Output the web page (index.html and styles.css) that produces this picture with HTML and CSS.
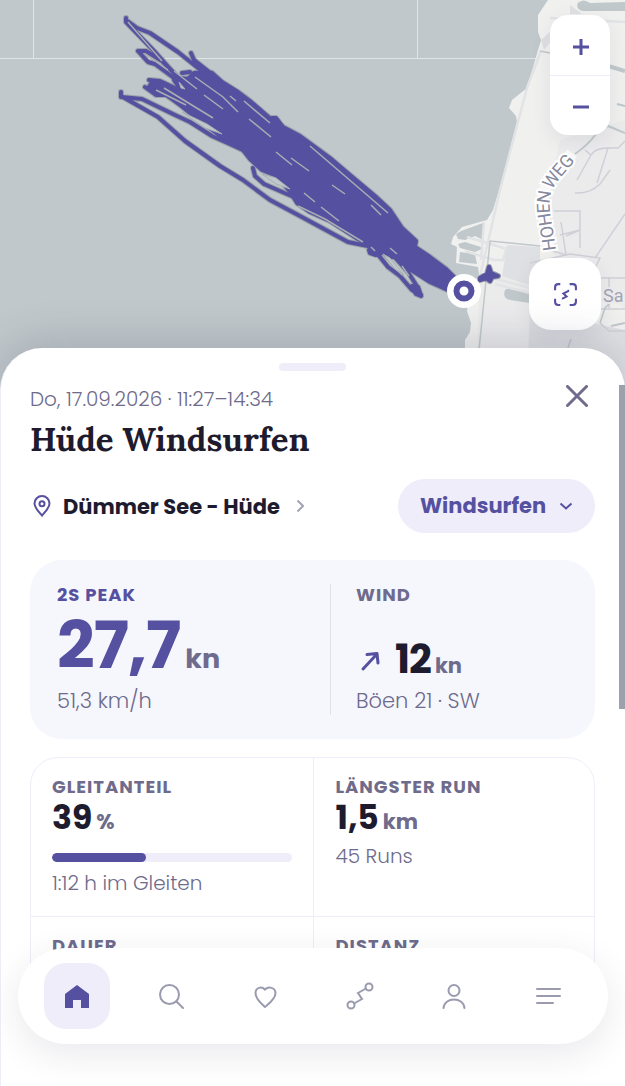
FILE: index.html
```html
<!DOCTYPE html>
<html lang="de">
<head>
<meta charset="utf-8">
<meta name="viewport" content="width=device-width, initial-scale=1">
<title>Hüde Windsurfen</title>
<link rel="stylesheet" href="styles.css">
</head>
<body>
<div class="app">
  <section class="map" aria-label="Karte">
    <svg class="map-canvas" viewBox="0 0 625 400" preserveAspectRatio="xMidYMin slice">
      <defs>
        <g id="track">
          <path class="mass" d="M174 80L180 78L188 79L194 73L208 72L212 73L222 82L238 92L250 101L272 120L276 120L283 127L300 136L315 147L330 158L350 175L375 196L390 210L402 228L416 241L415 247L430 257L446 269L458 281L450 291L430 282L405 266L395 257L388 257L376 251L372 246L358 239L330 221L310 212L297 203L291 193L277 176L262 170L250 159L243 150L225 140L215 132L200 121L180 105L165 94L155 92L149 87L152 82L166 85L182 92Z"/>
          <path d="M126 18L126 22L155 52L180 80M126 20L137 28L150 33L178 52L203 72M191 53L194 60L208 71M138 51L146 51L162 61L185 84M138 51L148 62L155 64L174 78L185 92M149 80L160 81L175 88L200 104M145 87L156 95L166 95L190 108M121 92L121 97L142 99L175 115L190 122L212 136L243 150M121 96L158 117L185 141L220 166L243 180L270 200L300 216L348 242L368 246L377 254M253 168L255 176L264 184L296 198M376 252L388 267L400 276L412 290L421 295M391 253L408 272L418 288L420 295M182 73L190 72M272 118L276 118L282 126"/>
          <path class="mass" d="M412 286L418 287L421 296L416 294Z M369 250L378 250L376 255L370 253Z"/>
          <path class="mass" d="M480 278L487 274L489 267L491 273L498 276L492 277L490 281L486 278L480 280Z"/>
        </g>
      </defs>
      <rect width="625" height="400" fill="#c0c8cb"/>
      <path d="M33.500 0V58M417.500 0V58M0 58.500H538" stroke="#e1e5e7" fill="none"/>
      <path fill="#f0f0ef" d="M548 0L538 15V32L541 40L527 88L512 100L509 108L516 116L517 122L502 180L493 210L487 220L462 227L453 237L451 244L457 247L456 263L478 267L479 274L470 290L467 311L471 323L470 332L465 340V400H625V0Z"/>
      <path fill="#c0c8cb" d="M461 231L483 223V240L475 236L465 240L458 239L456 234Z M458 244L465 242L484 248L475 252L460 248Z M460 252L475 254L477 264L459 262Z M578 3Q583-2 590 3L625 2V11H583Q574 9 579 0Z"/>
      <path fill="#ebebec" d="M560 140L548 190V250L625 310V120Z M480 280L530 270V400H475Z"/>
      <path fill="#dfe0e3" d="M507 245L540 247V265L528 285L502 276Z M541 40L552 30V40L544 50Z M570 5L582 14H570Z M530 310L625 330V400H526Z"/>
      <path fill="#c0c8cb" d="M505 290Q508 287 516 289L530 293V303L510 300Q502 298 505 290Z"/>
      <g fill="none" stroke="#e1e3e5" stroke-width="2.500">
        <path d="M550 18L625 22M541 51L527 88L500 190L478 285M467 237L507 249M465 251L494 260H503L507 247M484 222L481 260M497 279L530 288M495 284L530 293"/>
      </g>
      <g fill="none" stroke="#cfd0d8" stroke-width="1.500">
        <path d="M610 170L600 184Q590 194 575 193M554 211H580V248M561 222L566 255L553 251M566 236L580 230L560 235M530 263L570 254L600 258L595 268M595 258L625 214M600 278H625M599 309H625M585 150L591 155L577 180M591 155Q595 148 608 148L597 183M608 148H618L625 141M600 323L609 331H625M609 277V308"/>
      </g>
      <g fill="none" stroke="#c0c8cb">
        <path stroke-width="1.500" d="M540 51L550 53M479 350L490 241L540 246M600 323L605 308L613 300M571 339L563 362"/>
        <path stroke-width="4" d="M605 65L625 71"/>
        <path stroke-width="2" d="M575 154Q588 145 596 134L608 126L625 133M617 104L625 106M611 326L625 323"/>
      </g>
      <path id="road" fill="none" stroke="#f8f8f9" stroke-width="12" d="M549 251C547 228 537 203 547 185C553 174 562 166 572 153"/>
      <text class="road-name"><textPath href="#road">HOHEN WEG</textPath></text>
      <text class="town-name" x="603" y="302">Sa</text>
      <use href="#track" class="halo"/>
      <use href="#track" class="line"/>
      <path fill="none" stroke="#a9adb3" stroke-width="1.500" d="M128 22L162 61M145 54L168 70M195 77L223 97L238 112M204 95L223 109M174 71L197 89M156 90L186 105M164 88L213 118M244 101L270 123M249 119L271 137M230 96L236 101M276 152L292 165M291 158L309 171M310 146L388 213M332 185L345 194M304 193L315 202M321 207L339 221M371 205L381 215M298 206L325 219L363 242M390 248L397 254M371 247L375 251M382 255L393 265L402 275M402 266L409 276"/>
      <path fill="#c0c8cb" stroke="#a9adb3" d="M262 174L276 178L290 189L276 184ZM182 112L207 124L222 134L205 128ZM383 254L390 258L404 275L395 269ZM179 82L185 89L181 88Z"/>
      <circle cx="464" cy="291" r="17" fill="#fff"/>
      <circle cx="464" cy="291" r="7.500" fill="#fff" stroke="#5650a0" stroke-width="6"/>
    </svg>
    <div class="zoom">
      <button type="button" class="zoom-btn" aria-label="Vergrößern"><svg viewBox="0 0 16 16"><path d="M0 8H16M8 0V16"/></svg></button>
      <button type="button" class="zoom-btn" aria-label="Verkleinern"><svg viewBox="0 0 16 16"><path d="M0 8H16"/></svg></button>
    </div>
    <button type="button" class="fit" aria-label="Strecke einpassen">
      <svg viewBox="0 0 24 24"><path d="M2 8V5Q2 2 5 2H7M16 2H19Q22 2 22 5V8M22 16V19Q22 22 19 22H16M7 22H5Q2 22 2 19V16M9 16L13 14L10 11L15 8.500M9 16H8.500M14 8.500H15.500"/></svg>
    </button>
  </section>

  <main class="sheet">
    <div class="handle"></div>
    <header class="head">
      <div class="head-text">
        <p class="date">Do, 17.09.2026 · 11:27–14:34</p>
        <h1 class="title">Hüde Windsurfen</h1>
      </div>
      <button type="button" class="close" aria-label="Schließen"><svg viewBox="0 0 22 22"><path d="M1.500 1.500L20.500 20.500M20.500 1.500L1.500 20.500"/></svg></button>
    </header>

    <div class="place-row">
      <button type="button" class="place">
        <svg class="pin" viewBox="0 0 18 22"><path d="M9 20.500C6 17 1.500 13 1.500 8.500A7.500 7.500 0 0 1 16.500 8.500C16.500 13 12 17 9 20.500Z"/><circle cx="9" cy="8.700" r="2.500"/></svg>
        <span>Dümmer See - Hüde</span>
        <svg class="chev" viewBox="0 0 8 14"><path d="M1.500 1.500L7 7L1.500 12.500"/></svg>
      </button>
      <label class="sport">
        <select class="sport-select" aria-label="Sportart"><option>Windsurfen</option></select>
        <svg class="sport-chev" viewBox="0 0 14 8"><path d="M1.500 1.500L7 6.500L12.500 1.500"/></svg>
      </label>
    </div>

    <section class="hero">
      <div class="hero-peak">
        <h2 class="label label-accent">2S PEAK</h2>
        <p class="big"><span class="big-num">27,7</span><span class="big-unit">kn</span></p>
        <p class="sub hero-sub">51,3 km/h</p>
      </div>
      <div class="hero-wind">
        <h2 class="label">WIND</h2>
        <p class="wind"><svg class="arrow" viewBox="0 0 20 22"><path d="M3 19L17 4M7 4.500L17 3.500L18 13"/></svg><span class="wind-num">12</span><span class="unit">kn</span></p>
        <p class="sub hero-sub">Böen 21 · SW</p>
      </div>
    </section>

    <section class="stats">
      <div class="stat">
        <h2 class="label">GLEITANTEIL</h2>
        <p class="value"><span class="num">39</span><span class="unit">%</span></p>
        <progress class="bar" value="39" max="100" aria-label="Gleitanteil"></progress>
        <p class="sub">1:12 h im Gleiten</p>
      </div>
      <div class="stat">
        <h2 class="label">LÄNGSTER RUN</h2>
        <p class="value"><span class="num">1,5</span><span class="unit">km</span></p>
        <p class="sub">45 Runs</p>
      </div>
      <div class="stat"><h2 class="label">DAUER</h2></div>
      <div class="stat"><h2 class="label">DISTANZ</h2></div>
    </section>
  </main>

  <div class="scroll-thumb"></div>

  <nav class="nav" aria-label="Hauptmenü">
    <a class="nav-item active" href="#" aria-label="Start"><svg viewBox="0 0 28 28"><path d="M2 26V12L14 3L26 12V26H18V18H10V26Z"/></svg></a>
    <a class="nav-item" href="#" aria-label="Suche"><svg viewBox="0 0 28 28"><circle cx="12.500" cy="12.500" r="9.500"/><path d="M19.500 19.500L26 26"/></svg></a>
    <a class="nav-item" href="#" aria-label="Favoriten"><svg viewBox="0 0 28 28"><path d="M14 25C10 21.500 4.500 17 4.500 11C4.500 5.500 10.500 4 14 7.500C17.500 4 24.500 5.500 24.500 11C24.500 17 18 21.500 14 25Z"/></svg></a>
    <a class="nav-item" href="#" aria-label="Strecken"><svg viewBox="0 0 28 28"><circle cx="23" cy="5" r="3.500"/><circle cx="5" cy="23" r="3.500"/><path d="M20 6.500L12 11L16 17L8 21.500"/></svg></a>
    <a class="nav-item" href="#" aria-label="Profil"><svg viewBox="0 0 28 28"><circle cx="14" cy="8.500" r="5.500"/><path d="M3.500 26C5 14.500 23 14.500 24.500 26"/></svg></a>
    <a class="nav-item" href="#" aria-label="Menü"><svg viewBox="0 0 28 28"><path d="M3 7H26M3 14H26M3 21H19"/></svg></a>
  </nav>
</div>
</body>
</html>
```

FILE: styles.css
```css
:root {
  --accent: #5650a0;
  --ink: #1e1b2e;
  --muted: #6e6b8c;
  --tint: #eeedf9;
  --line: #eeedf9;
}

* {
  box-sizing: border-box;
}

body {
  margin: 0;
  background: #fff;
  color: var(--ink);
  font-family: Poppins, Inter, sans-serif;
  font-size: 20px;
}

p, h1, h2 {
  margin: 0;
}

button, select {
  padding: 0;
  border: 0;
  background: none;
  color: inherit;
  font: inherit;
}

svg {
  display: block;
  flex: none;
}

.app {
  position: relative;
  display: flex;
  flex-direction: column;
  height: 100vh;
  overflow: hidden;
}

.map {
  position: relative;
  flex: none;
  height: 400px;
  margin-bottom: -52px;
}

.map-canvas {
  width: 100%;
  height: 100%;
}

.halo, .line {
  stroke-linecap: round;
  stroke-linejoin: round;
  fill: none;
}

.halo {
  stroke: #9da1a9;
  stroke-width: 6px;
}

.line {
  stroke: var(--accent);
  stroke-width: 4px;
}

#track .mass {
  fill: #5650a0;
}

.road-name, .town-name {
  font-family: Roboto, sans-serif;
  font-size: 18px;
  fill: #86889e;
  stroke: #fff;
  stroke-width: 4px;
  paint-order: stroke;
}

.road-name {
  dominant-baseline: central;
}

.town-name {
  fill: #a3a4b3;
  stroke: #ececee;
}

.zoom {
  position: absolute;
  top: 15px;
  right: 15px;
  width: 60px;
  border-radius: 18px;
  background: #fff;
  box-shadow: 0 6px 20px rgba(40, 40, 70, 0.08);
}

.zoom-btn {
  display: grid;
  place-items: center;
  width: 100%;
  height: 60px;
  padding: 3px 0 0 2px;
}

.zoom-btn + .zoom-btn {
  border-top: 1px solid var(--tint);
}

.zoom-btn svg {
  width: 16px;
  fill: none;
  stroke: var(--accent);
  stroke-width: 3px;
}

.fit {
  position: absolute;
  top: 258px;
  right: 24px;
  display: grid;
  place-items: center;
  width: 72px;
  height: 72px;
  border-radius: 22px;
  background: #fff;
  box-shadow: 0 6px 20px rgba(40, 40, 70, 0.08);
}

.fit svg {
  width: 25px;
  fill: none;
  stroke: var(--accent);
  stroke-width: 2px;
}

.sheet {
  position: relative;
  display: flex;
  flex: 1;
  flex-direction: column;
  min-height: 0;
  padding: 15px 30px 80px 29px;
  border-left: 1px solid var(--tint);
  border-radius: 42px 42px 0 0;
  background: #fff;
  box-shadow: 0 -8px 40px rgba(60, 65, 95, 0.2);
}

.handle {
  flex: none;
  width: 67px;
  height: 8px;
  margin: 0 auto 13px;
  border-radius: 4px;
  background: var(--tint);
}

.head {
  display: flex;
  justify-content: space-between;
  align-items: flex-start;
}

.date {
  color: var(--muted);
  font-size: 20px;
  font-weight: 300;
  line-height: 30px;
}

.title {
  margin-top: 5px;
  font-family: Lora, "Liberation Serif", serif;
  font-size: 33px;
  font-weight: 700;
  line-height: 40px;
}

.close {
  display: grid;
  place-items: center;
  width: 36px;
  height: 24px;
}

.close svg {
  width: 22px;
  fill: none;
  stroke: var(--muted);
  stroke-width: 3px;
  stroke-linecap: round;
}

.place-row {
  display: flex;
  flex: none;
  justify-content: space-between;
  align-items: center;
  height: 54px;
  margin-top: 20px;
}

.place {
  display: flex;
  align-items: center;
  gap: 12px;
  padding-left: 3px;
  font-size: 21px;
  font-weight: 700;
}

.place svg {
  fill: none;
  stroke: var(--accent);
  stroke-width: 2px;
}

.pin {
  width: 18px;
}

.chev {
  width: 8px;
  margin-left: 4px;
}

.place .chev {
  stroke: #a2a3b3;
}

.sport {
  display: flex;
  align-items: center;
  gap: 12px;
  height: 54px;
  padding: 0 22px;
  border-radius: 27px;
  background: var(--tint);
  color: var(--accent);
}

.sport-select {
  appearance: none;
  padding-bottom: 2px;
  font-size: 21px;
  font-weight: 700;
}

.sport-chev {
  width: 14px;
  fill: none;
  stroke: currentColor;
  stroke-width: 2px;
}

.hero {
  display: grid;
  flex: none;
  grid-template-columns: 300fr 265fr;
  margin-top: 27px;
  padding: 24px 0;
  border-radius: 32px;
  background: #f6f7fd;
}

.hero-peak {
  padding-left: 27px;
}

.hero-wind {
  padding-left: 25px;
  border-left: 1px solid #e2e2ec;
}

.label {
  color: var(--muted);
  font-size: 18px;
  font-weight: 700;
  letter-spacing: 1px;
  line-height: 22px;
}

.label-accent {
  color: var(--accent);
}

.big, .wind {
  display: flex;
  align-items: baseline;
  height: 81px;
}

.big {
  gap: 5px;
  line-height: 78px;
}

.big-num {
  color: var(--accent);
  font-size: 66px;
  font-weight: 700;
  letter-spacing: -1px;
}

.big-unit {
  color: var(--muted);
  font-size: 27px;
  font-weight: 700;
}

.wind {
  line-height: 106px;
}

.arrow {
  align-self: flex-end;
  width: 20px;
  margin: 0 15px 15px 4px;
  fill: none;
  stroke: var(--accent);
  stroke-width: 3px;
  stroke-linecap: round;
  stroke-linejoin: round;
}

.wind-num {
  font-size: 40px;
  font-weight: 700;
  letter-spacing: -1px;
}

.unit {
  margin-left: 4px;
  color: var(--muted);
  font-size: 21px;
  font-weight: 700;
}

.sub {
  color: var(--muted);
  font-size: 20px;
  font-weight: 300;
  line-height: 28px;
}

.hero-sub {
  font-size: 21px;
}

.stats {
  display: grid;
  grid-template-columns: 284fr 280fr;
  min-height: 0;
  margin-top: 18px;
  border: 1px solid var(--line);
  border-radius: 28px;
  overflow: hidden;
}

.stat {
  min-height: 159px;
  padding: 18px 21px;
  border-bottom: 1px solid var(--line);
}

.stat:nth-child(odd) {
  border-right: 1px solid var(--line);
}

.value {
  display: flex;
  align-items: baseline;
  line-height: 40px;
}

.num {
  font-size: 33px;
  font-weight: 700;
}

.bar {
  appearance: none;
  display: block;
  width: 100%;
  height: 9px;
  margin: 11px 0 7px;
  border: 0;
  border-radius: 5px;
  background: var(--tint);
  overflow: hidden;
}

.bar::-webkit-progress-bar {
  background: var(--tint);
}

.bar::-webkit-progress-value {
  border-radius: 5px;
  background: var(--accent);
}

.scroll-thumb {
  position: absolute;
  top: 385px;
  right: 0;
  width: 6px;
  height: 324px;
  background: #9da1ab;
}

.nav {
  position: absolute;
  right: 17px;
  bottom: 42px;
  left: 18px;
  display: flex;
  justify-content: space-between;
  align-items: center;
  height: 96px;
  padding: 0 27px 0 26px;
  border-radius: 48px;
  background: #fff;
  box-shadow: 0 10px 36px rgba(40, 40, 70, 0.1);
}

.nav-item {
  display: grid;
  place-items: center;
  width: 66px;
  height: 66px;
  border-radius: 22px;
}

.nav-item svg {
  width: 28px;
  fill: none;
  stroke: #9a9bae;
  stroke-width: 2px;
  stroke-linecap: round;
}

.nav-item.active {
  background: var(--tint);
}

.nav-item.active svg {
  fill: var(--accent);
  stroke: none;
}
```
